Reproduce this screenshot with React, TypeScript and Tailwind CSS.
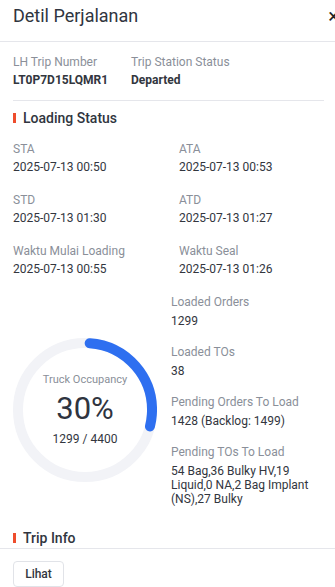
export default function App() {
  const fields = [
    { label: "STA", value: "2025-07-13 00:50" },
    { label: "ATA", value: "2025-07-13 00:53" },
    { label: "STD", value: "2025-07-13 01:30" },
    { label: "ATD", value: "2025-07-13 01:27" },
    { label: "Waktu Mulai Loading", value: "2025-07-13 00:55" },
    { label: "Waktu Seal", value: "2025-07-13 01:26" },
  ];

  const stats = [
    { label: "Loaded Orders", value: "1299" },
    { label: "Loaded TOs", value: "38" },
    { label: "Pending Orders To Load", value: "1428 (Backlog: 1499)" },
    {
      label: "Pending TOs To Load",
      value: "54 Bag,36 Bulky HV,19 Liquid,0 NA,2 Bag Implant (NS),27 Bulky",
    },
  ];

  const r = 67;
  const circ = 2 * Math.PI * r;
  const arc = (100 / 360) * circ;

  return (
    <div className="w-[335px] h-[587px] overflow-hidden bg-white font-['Roboto',sans-serif] text-[#32363e]">
      {/* Header */}
      <div className="flex items-center justify-between pl-[13px] pt-[4px] pb-[13px] border-b border-[#e5e6eb]">
        <h1 className="text-[18px] leading-[24px] font-normal text-[#303540]">Detil Perjalanan</h1>
        <span className="text-[20px] leading-[24px] -mr-[4px] text-[#222]">×</span>
      </div>

      {/* Trip number */}
      <div className="mx-[13px] mr-[11px] pt-[12px] pb-[12px] border-b border-[#e5e6eb] flex gap-[24px]">
        <div className="w-[94px]">
          <p className="text-[12px] leading-[16px] text-[#8a8f99]">LH Trip Number</p>
          <p className="mt-[2px] text-[12px] leading-[16px] font-bold text-[#32363e]">LT0P7D15LQMR1</p>
        </div>
        <div>
          <p className="text-[12px] leading-[16px] text-[#8a8f99]">Trip Station Status</p>
          <p className="mt-[2px] text-[12px] leading-[16px] font-bold text-[#32363e]">Departed</p>
        </div>
      </div>

      {/* Loading Status */}
      <div className="px-[13px] pt-[7px]">
        <div className="flex items-center gap-[7px]">
          <span className="w-[3px] h-[10px] bg-[#ee4d2d]" />
          <h2 className="text-[14px] leading-[20px] font-medium text-[#303540]">Loading Status</h2>
        </div>

        <div className="grid grid-cols-[166px_1fr] gap-y-[17px] mt-[13px]">
          {fields.map((f) => (
            <div key={f.label}>
              <p className="text-[12px] leading-[16px] text-[#8a8f99]">{f.label}</p>
              <p className="mt-[2px] text-[12px] leading-[16px] text-[#32363e]">{f.value}</p>
            </div>
          ))}
        </div>

        <div className="flex items-center gap-[14px] mt-[17px]">
          <div className="relative w-[144px] h-[144px] shrink-0 mt-[20px]">
            <svg width="144" height="144" viewBox="0 0 144 144">
              <circle cx="72" cy="72" r={r} fill="none" stroke="#f2f3f7" strokeWidth="10" />
              <circle
                cx="72"
                cy="72"
                r={r}
                fill="none"
                stroke="#2e6ff0"
                strokeWidth="10"
                strokeLinecap="round"
                strokeDasharray={`${arc} ${circ}`}
                transform="rotate(-86 72 72)"
              />
            </svg>
            <div className="absolute inset-0 flex flex-col items-center justify-center">
              <p className="text-[11px] leading-[14px] text-[#8a8f99]">Truck Occupancy</p>
              <p className="text-[31px] leading-[36px] mt-[4px] text-[#2f3440]">30%</p>
              <p className="text-[12px] leading-[16px] mt-[4px] text-[#32363e]">1299 / 4400</p>
            </div>
          </div>

          <div className="flex flex-col gap-[16px]">
            {stats.map((s) => (
              <div key={s.label}>
                <p className="text-[12px] leading-[16px] text-[#8a8f99]">{s.label}</p>
                <p className="mt-[4px] text-[12px] leading-[14px] text-[#32363e]">{s.value}</p>
              </div>
            ))}
          </div>
        </div>

        <div className="flex items-center gap-[7px] mt-[22px]">
          <span className="w-[3px] h-[10px] bg-[#ee4d2d]" />
          <h2 className="text-[14px] leading-[20px] font-medium text-[#303540]">Trip Info</h2>
        </div>
      </div>

      <div className="border-b border-[#e5e6eb]" />

      <div className="px-[13px] pt-[12px]">
        <button className="h-[26px] w-[51px] border border-[#e1e3e8] rounded-[4px] text-[12px] font-medium text-[#32363e]">
          Lihat
        </button>
      </div>
    </div>
  );
}
